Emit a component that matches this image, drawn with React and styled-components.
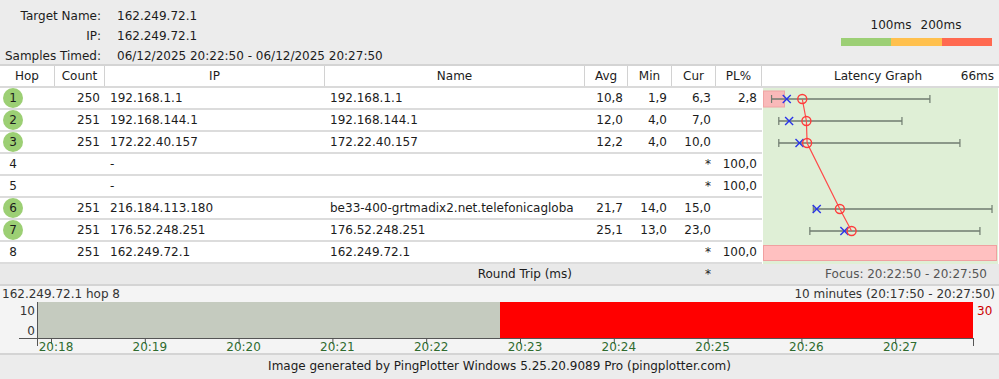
import React from "react";
import styled, { createGlobalStyle } from "styled-components";

const GlobalStyle = createGlobalStyle`
  body {
    margin: 0;
    font-family: "DejaVu Sans", Verdana, sans-serif;
    font-size: 12px;
    color: #1c1c1c;
    background: #ececec;
  }
`;

const COLS = "55px 50px 220px 260px 43px 44px 44px 46px";

const Page = styled.div`
  width: 999px;
  display: flex;
  flex-direction: column;
`;

const Summary = styled.div`
  height: 64px;
  display: flex;
  justify-content: space-between;
  background: #ececec;
  border-bottom: 2px solid #d4d4d4;
`;

const InfoGrid = styled.div`
  display: grid;
  grid-template-columns: 101px auto;
  column-gap: 16px;
  padding-top: 6px;
  line-height: 20px;
`;

const InfoLabel = styled.div`
  text-align: right;
`;

const Legend = styled.div`
  width: 151px;
  margin: 18px 7px 0 0;
  display: flex;
  flex-direction: column;
  gap: 6px;
`;

const LegendLabels = styled.div`
  display: grid;
  grid-template-columns: 25px 50px 50px;
  line-height: 14px;
`;

const LegendLabel = styled.span`
  grid-column: ${(p) => p.$col};
  text-align: center;
`;

const LegendBar = styled.div`
  display: flex;
  height: 8px;
`;

const LegendSeg = styled.div`
  flex: 1;
  background: ${(p) => p.$color};
`;

const HeaderRow = styled.div`
  display: grid;
  grid-template-columns: ${COLS} 1fr;
  height: 20px;
  line-height: 20px;
  background: #fff;
  border-bottom: 2px solid #dadada;
`;

const HeaderCell = styled.div`
  text-align: center;
  border-right: ${(p) => (p.$last ? "none" : "1px solid #d2d2d2")};
`;

const GraphHeader = styled.div`
  display: grid;
  grid-template-columns: 1fr auto 1fr;
  padding-right: 5px;
`;

const GraphScale = styled.span`
  justify-self: end;
`;

const Body = styled.div`
  display: grid;
  grid-template-columns: 762px 1fr;
  background: #fff;
`;

const Rows = styled.div`
  display: flex;
  flex-direction: column;
`;

const Row = styled.div`
  display: grid;
  grid-template-columns: ${COLS};
  height: 20px;
  line-height: 20px;
  border-bottom: 2px solid #dcdcdc;
`;

const Cell = styled.div`
  padding: 0 5px;
  text-align: ${(p) => (p.$right ? "right" : "left")};
  white-space: nowrap;
  overflow: hidden;
`;

const HopCell = styled.div`
  padding-left: 3px;
  display: flex;
  align-items: center;
`;

const HopBadge = styled.span`
  width: 20px;
  height: 20px;
  border-radius: 50%;
  text-align: center;
  background: ${(p) => (p.$active ? "#9ccf74" : "transparent")};
`;

const RoundTrip = styled.div`
  display: grid;
  grid-template-columns: 585px 43px 44px 44px 46px 1fr;
  height: 20px;
  line-height: 20px;
  background: #e9e9e9;
  border-bottom: 2px solid #d4d4d4;
`;

const RoundLabel = styled.div`
  text-align: right;
  padding-right: 13px;
`;

const Focus = styled.div`
  grid-column: 6;
  text-align: right;
  padding-right: 12px;
  color: #555;
`;

const ChartPanel = styled.div`
  height: 67px;
  display: flex;
  flex-direction: column;
  background: #f4f4f4;
  border-bottom: 2px solid #d4d4d4;
`;

const ChartTitle = styled.div`
  display: flex;
  justify-content: space-between;
  height: 16px;
  line-height: 16px;
  padding: 0 4px 0 2px;
  color: #333;
`;

const Footer = styled.div`
  height: 22px;
  line-height: 22px;
  text-align: center;
  background: #ececec;
`;

const hops = [
  { hop: 1, count: 250, ip: "192.168.1.1", name: "192.168.1.1", avg: "10,8", min: "1,9", cur: "6,3", pl: "2,8", g: { min: 1.9, avg: 10.8, cur: 6.3, max: 47.8, loss: true } },
  { hop: 2, count: 251, ip: "192.168.144.1", name: "192.168.144.1", avg: "12,0", min: "4,0", cur: "7,0", pl: "", g: { min: 4, avg: 12, cur: 7, max: 39.7 } },
  { hop: 3, count: 251, ip: "172.22.40.157", name: "172.22.40.157", avg: "12,2", min: "4,0", cur: "10,0", pl: "", g: { min: 4, avg: 12.2, cur: 10, max: 56.5 } },
  { hop: 4, count: "", ip: "-", name: "", avg: "", min: "", cur: "*", pl: "100,0" },
  { hop: 5, count: "", ip: "-", name: "", avg: "", min: "", cur: "*", pl: "100,0" },
  { hop: 6, count: 251, ip: "216.184.113.180", name: "be33-400-grtmadix2.net.telefonicagloba", avg: "21,7", min: "14,0", cur: "15,0", pl: "", g: { min: 14, avg: 21.7, cur: 15, max: 65.8 } },
  { hop: 7, count: 251, ip: "176.52.248.251", name: "176.52.248.251", avg: "25,1", min: "13,0", cur: "23,0", pl: "", g: { min: 13, avg: 25.1, cur: 23, max: 62.3 } },
  { hop: 8, count: 251, ip: "162.249.72.1", name: "162.249.72.1", avg: "", min: "", cur: "*", pl: "100,0", g: { dead: true } },
];

const px = (ms) => 3 + ms * 3.45;
const rowY = (i) => 11 + i * 22;

function LatencyGraph() {
  const live = hops.map((h, i) => ({ ...h, i })).filter((h) => h.g && !h.g.dead);
  const line = live.map((h) => `${px(h.g.avg)},${rowY(h.i)}`).join(" ");
  return (
    <svg width="237" height="176" viewBox="0 0 237 176">
      <rect x="1" y="0" width="235" height="176" fill="#dfefd6" />
      {hops.map((h, i) =>
        h.g && h.g.dead ? (
          <rect key={i} x="1.5" y={rowY(i) - 7.5} width="233" height="15" fill="#ffc0c0" stroke="#f0a0a0" />
        ) : null
      )}
      {live.map((h) =>
        h.g.loss ? (
          <rect key={"l" + h.i} x="1.5" y={rowY(h.i) - 8} width="21" height="16" fill="#f9b9b9" stroke="#f0a4a4" />
        ) : null
      )}
      {live.map((h) => {
        const y = rowY(h.i);
        return (
          <g key={"b" + h.i} stroke="#6f7b6f" strokeWidth="1.6">
            <line x1={px(h.g.min)} y1={y} x2={px(h.g.max)} y2={y} />
            <line x1={px(h.g.min)} y1={y - 4} x2={px(h.g.min)} y2={y + 4} strokeWidth="1.2" />
            <line x1={px(h.g.max)} y1={y - 4} x2={px(h.g.max)} y2={y + 4} strokeWidth="1.2" />
          </g>
        );
      })}
      <polyline points={line} fill="none" stroke="#ff4a4a" strokeWidth="1.2" />
      {live.map((h) => {
        const x = px(h.g.cur);
        const y = rowY(h.i);
        return (
          <g key={"x" + h.i} stroke="#2a35e8" strokeWidth="1.4">
            <line x1={x - 4} y1={y - 4} x2={x + 4} y2={y + 4} />
            <line x1={x - 4} y1={y + 4} x2={x + 4} y2={y - 4} />
          </g>
        );
      })}
      {live.map((h) => (
        <circle key={"c" + h.i} cx={px(h.g.avg)} cy={rowY(h.i)} r="4.5" fill="none" stroke="#ff3b3b" strokeWidth="1.4" />
      ))}
    </svg>
  );
}

const ticks = ["20:18", "20:19", "20:20", "20:21", "20:22", "20:23", "20:24", "20:25", "20:26", "20:27"];

function HistoryChart() {
  return (
    <svg width="999" height="51" viewBox="0 0 999 51">
      <rect x="38" y="0" width="462" height="36" fill="#c5cbbf" />
      <rect x="500" y="0" width="473" height="36" fill="#ff0000" />
      <g stroke="#555" strokeWidth="1">
        <line x1="37.5" y1="0" x2="37.5" y2="44" />
        <line x1="19" y1="36.5" x2="974" y2="36.5" />
        <line x1="973.5" y1="36" x2="973.5" y2="44" />
        {ticks.map((t, k) => (
          <line key={t} x1={51.5 + k * 93.8} y1="36" x2={51.5 + k * 93.8} y2="42" />
        ))}
      </g>
      <g fontFamily="DejaVu Sans, Verdana, sans-serif" fontSize="12">
        <text x="35" y="13" textAnchor="end" fill="#333">10</text>
        <text x="35" y="33" textAnchor="end" fill="#333">0</text>
        <text x="977" y="13" fill="#cc0000">30</text>
        {ticks.map((t, k) => (
          <text key={t} x={56 + k * 93.8} y="49" textAnchor="middle" fill="#2f6b2f">{t}</text>
        ))}
      </g>
    </svg>
  );
}

export default function App() {
  return (
    <Page>
      <GlobalStyle />
      <Summary>
        <InfoGrid>
          <InfoLabel>Target Name:</InfoLabel>
          <div>162.249.72.1</div>
          <InfoLabel>IP:</InfoLabel>
          <div>162.249.72.1</div>
          <InfoLabel>Samples Timed:</InfoLabel>
          <div>06/12/2025 20:22:50 - 06/12/2025 20:27:50</div>
        </InfoGrid>
        <Legend>
          <LegendLabels>
            <LegendLabel $col={2}>100ms</LegendLabel>
            <LegendLabel $col={3}>200ms</LegendLabel>
          </LegendLabels>
          <LegendBar>
            <LegendSeg $color="#9ccf75" />
            <LegendSeg $color="#ffc04d" />
            <LegendSeg $color="#ff6950" />
          </LegendBar>
        </Legend>
      </Summary>

      <HeaderRow>
        <HeaderCell>Hop</HeaderCell>
        <HeaderCell>Count</HeaderCell>
        <HeaderCell>IP</HeaderCell>
        <HeaderCell>Name</HeaderCell>
        <HeaderCell>Avg</HeaderCell>
        <HeaderCell>Min</HeaderCell>
        <HeaderCell>Cur</HeaderCell>
        <HeaderCell>PL%</HeaderCell>
        <GraphHeader>
          <span />
          <span>Latency Graph</span>
          <GraphScale>66ms</GraphScale>
        </GraphHeader>
      </HeaderRow>

      <Body>
        <Rows>
          {hops.map((h) => (
            <Row key={h.hop}>
              <HopCell>
                <HopBadge $active={h.g && !h.g.dead}>{h.hop}</HopBadge>
              </HopCell>
              <Cell $right>{h.count}</Cell>
              <Cell>{h.ip}</Cell>
              <Cell>{h.name}</Cell>
              <Cell $right>{h.avg}</Cell>
              <Cell $right>{h.min}</Cell>
              <Cell $right>{h.cur}</Cell>
              <Cell $right>{h.pl}</Cell>
            </Row>
          ))}
        </Rows>
        <LatencyGraph />
      </Body>

      <RoundTrip>
        <RoundLabel>Round Trip (ms)</RoundLabel>
        <span />
        <span />
        <Cell $right>*</Cell>
        <span />
        <Focus>Focus: 20:22:50 - 20:27:50</Focus>
      </RoundTrip>

      <ChartPanel>
        <ChartTitle>
          <span>162.249.72.1 hop 8</span>
          <span>10 minutes (20:17:50 - 20:27:50)</span>
        </ChartTitle>
        <HistoryChart />
      </ChartPanel>

      <Footer>Image generated by PingPlotter Windows 5.25.20.9089 Pro (pingplotter.com)</Footer>
    </Page>
  );
}
